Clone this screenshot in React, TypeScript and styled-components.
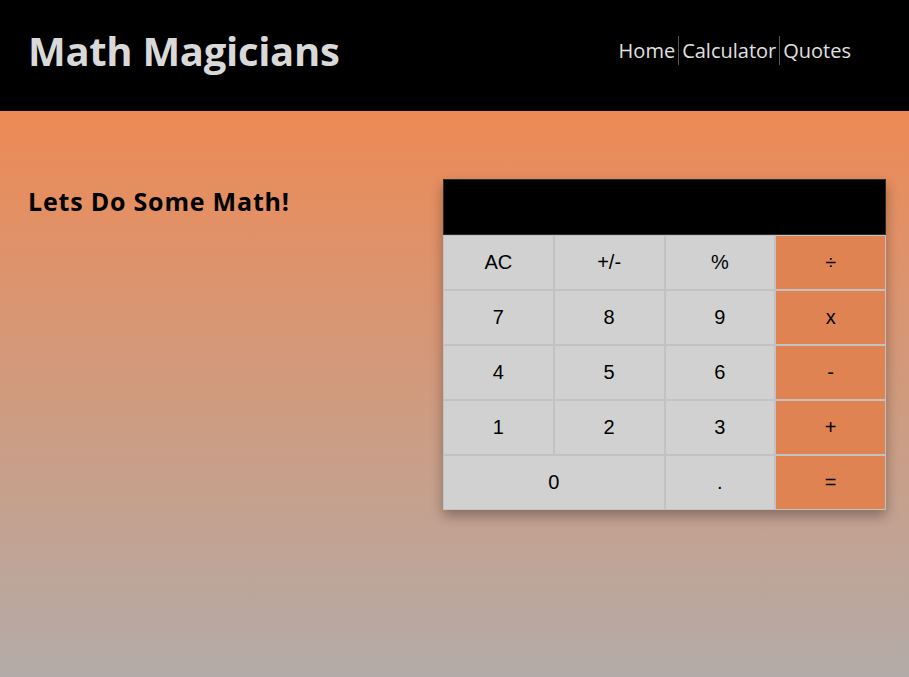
import React from "react";
import styled, { createGlobalStyle } from "styled-components";

const Global = createGlobalStyle`
  html, body { margin: 0; padding: 0; }
  body { font-family: "Open Sans", "Noto Sans", sans-serif; }
  * { box-sizing: border-box; }
`;

const Page = styled.div`
  display: flex;
  flex-direction: column;
  min-height: 677px;
`;

const Header = styled.header`
  height: 111px;
  background: #000;
  display: flex;
  align-items: center;
  justify-content: space-between;
  padding: 0 55px 0 28px;
`;

const Title = styled.h1`
  margin: 0;
  font-size: 40px;
  font-weight: 700;
  color: #d9d9d9;
  letter-spacing: -0.3px;
  padding-bottom: 10px;
`;

const Nav = styled.nav`
  display: flex;
  align-items: center;
  padding-bottom: 10px;
`;

const NavLink = styled.a<{ $first?: boolean }>`
  color: #e0e0e0;
  font-size: 20px;
  text-decoration: none;
  padding: 0 3px;
  border-left: ${(p) => (p.$first ? "none" : "1px solid #555")};
  line-height: 29px;
`;

const Main = styled.main`
  flex: 1;
  background: linear-gradient(#ed8a55, #b3aba8);
  display: flex;
  justify-content: space-between;
  align-items: flex-start;
  padding: 68px 23px 0 28px;
`;

const Heading = styled.h2`
  margin: 5px 0 0;
  font-size: 25px;
  font-weight: 700;
  letter-spacing: 0.8px;
  color: #000;
`;

const Calc = styled.div`
  width: 443px;
  display: grid;
  grid-template-columns: repeat(4, 1fr);
  box-shadow: 0 6px 12px rgba(0, 0, 0, 0.32);
`;

const Display = styled.div`
  grid-column: 1 / -1;
  height: 56px;
  background: #000;
  border: 1px solid #2a2a2a;
`;

const Key = styled.button<{ $op?: boolean; $wide?: boolean }>`
  grid-column: ${(p) => (p.$wide ? "span 2" : "auto")};
  height: 55px;
  border: 1px solid #c2c2c2;
  background: ${(p) => (p.$op ? "#e08353" : "#d1d1d1")};
  font-family: "Liberation Sans", Arial, sans-serif;
  font-size: 20px;
  color: #000;
  padding: 0;
`;

const rows: { label: string; op?: boolean; wide?: boolean }[] = [
  { label: "AC" }, { label: "+/-" }, { label: "%" }, { label: "÷", op: true },
  { label: "7" }, { label: "8" }, { label: "9" }, { label: "x", op: true },
  { label: "4" }, { label: "5" }, { label: "6" }, { label: "-", op: true },
  { label: "1" }, { label: "2" }, { label: "3" }, { label: "+", op: true },
  { label: "0", wide: true }, { label: "." }, { label: "=", op: true },
];

export default function App() {
  return (
    <Page>
      <Global />
      <Header>
        <Title>Math Magicians</Title>
        <Nav>
          <NavLink $first href="#">Home</NavLink>
          <NavLink href="#">Calculator</NavLink>
          <NavLink href="#">Quotes</NavLink>
        </Nav>
      </Header>
      <Main>
        <Heading>Lets Do Some Math!</Heading>
        <Calc>
          <Display />
          {rows.map((k) => (
            <Key key={k.label} $op={k.op} $wide={k.wide}>{k.label}</Key>
          ))}
        </Calc>
      </Main>
    </Page>
  );
}
